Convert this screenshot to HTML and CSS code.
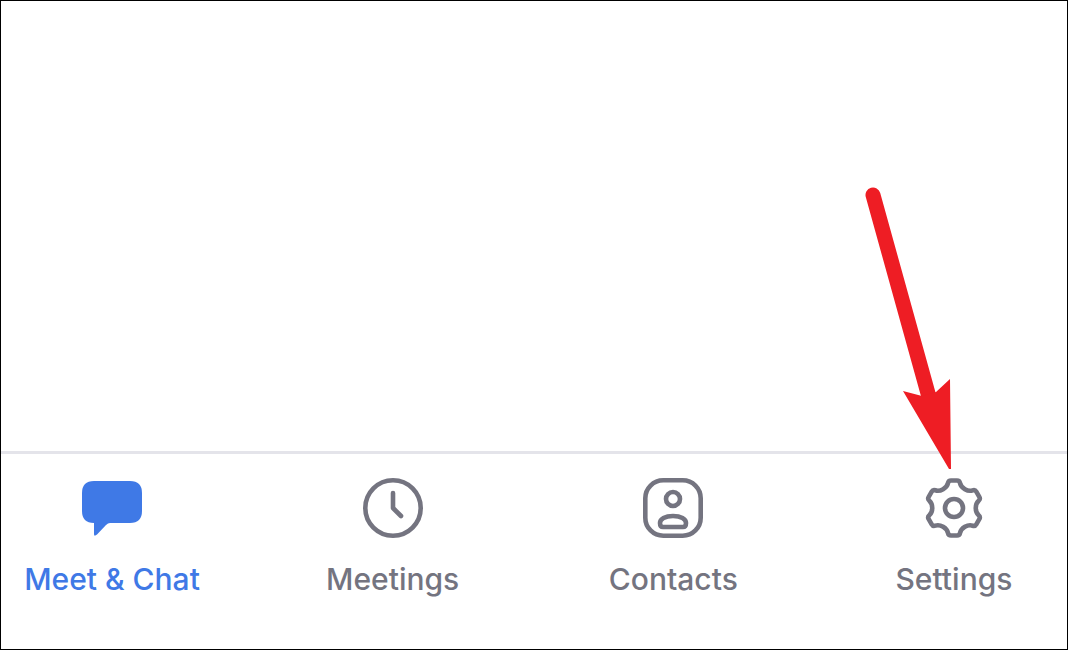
FILE: index.html
```html
<!DOCTYPE html>
<html lang="en">
<head>
  <meta charset="UTF-8">
  <meta name="viewport" content="width=device-width, initial-scale=1.0">
  <title>Meet &amp; Chat</title>
  <link rel="stylesheet" href="styles.css">
</head>
<body>
  <div class="screen">
    <main class="content"></main>

    <nav class="tab-bar">
      <a href="#chat" class="tab active">
        <svg class="icon" viewBox="0 0 60 60" aria-hidden="true">
          <path fill="currentColor" d="M12 3H48Q60 3 60 15V33Q60 45 48 45H28Q26 45 24 47L15 56.500Q12 59 12 56V45Q0 45 0 33V15Q0 3 12 3Z"/>
        </svg>
        <span>Meet &amp; Chat</span>
      </a>
      <a href="#meetings" class="tab">
        <svg class="icon outline" viewBox="0 0 60 60" aria-hidden="true">
          <circle cx="30" cy="30" r="27.700"/>
          <path d="M30 15V30L38 38"/>
        </svg>
        <span>Meetings</span>
      </a>
      <a href="#contacts" class="tab">
        <svg class="icon outline" viewBox="0 0 60 60" aria-hidden="true">
          <rect x="2.300" y="2.300" width="55.400" height="55.400" rx="18"/>
          <circle cx="30" cy="21" r="7"/>
          <path d="M20 49H40Q43 49 43 45C43 41 38 38 30 38S17 41 17 45Q17 49 20 49Z"/>
        </svg>
        <span>Contacts</span>
      </a>
      <a href="#settings" class="tab">
        <svg class="icon outline" viewBox="-30 -30 60 60" aria-hidden="true">
          <path d="M-6 -25Q-5.500 -27.500 -3 -27.500H3Q5.500 -27.500 6 -25C7 -20 13.800 -16 18.650 -17.700Q21.100 -18.500 22.300 -16.350L25.300 -11.150Q26.600 -9 24.650 -7.300C20.800 -3.900 20.800 3.900 24.650 7.300Q26.600 9 25.300 11.150L22.300 16.350Q21.100 18.500 18.650 17.700C13.800 16 7 20 6 25Q5.500 27.500 3 27.500H-3Q-5.500 27.500 -6 25C-7 20 -13.800 16 -18.650 17.700Q-21.100 18.500 -22.300 16.350L-25.300 11.150Q-26.600 9 -24.650 7.300C-20.800 3.900 -20.800 -3.900 -24.650 -7.300Q-26.600 -9 -25.300 -11.150L-22.300 -16.350Q-21.100 -18.500 -18.650 -17.700C-13.800 -16 -7 -20 -6 -25Z"/>
          <circle r="9"/>
        </svg>
        <span>Settings</span>
      </a>
    </nav>

    <!-- Arrow pointing at Settings -->
    <svg class="arrow" viewBox="0 0 86 282" aria-hidden="true">
      <path class="arrow-line" d="M8 8L64 210"/>
      <path class="arrow-head" d="M38 204L57 209L71 205L85 192L86 282H84Z"/>
    </svg>
  </div>
</body>
</html>
```

FILE: styles.css
```css
:root {
  --primary: #3f79e6;
  --text: #747480;
  --divider: #e4e4ea;
  --arrow: #ee1d24;
}

* {
  margin: 0;
  padding: 0;
  box-sizing: border-box;
  font-family: Inter, 'Liberation Sans', sans-serif;
}

.screen {
  position: relative;
  display: flex;
  flex-direction: column;
  min-height: 100vh;
  border: 1px solid #000;
  background: #fff;
}

.content {
  flex: 1;
}

.tab-bar {
  display: flex;
  justify-content: space-between;
  padding: 24px 18px 51px 16px;
  border-top: 3px solid var(--divider);
}

.tab {
  display: flex;
  flex-direction: column;
  align-items: center;
  gap: 22px;
  width: 190px;
  color: var(--text);
  font-size: 30px;
  font-weight: 500;
  line-height: 38px;
  white-space: nowrap;
  text-decoration: none;
}

.tab.active {
  color: var(--primary);
}

.icon {
  width: 60px;
  height: 60px;
}

.outline {
  fill: none;
  stroke: currentColor;
  stroke-width: 4.6;
  stroke-linecap: round;
  stroke-linejoin: round;
}

.arrow {
  position: absolute;
  right: 116px;
  bottom: 180px;
  width: 86px;
  height: 282px;
}

.arrow-line {
  stroke: var(--arrow);
  stroke-width: 15;
  stroke-linecap: round;
}

.arrow-head {
  fill: var(--arrow);
}
```
